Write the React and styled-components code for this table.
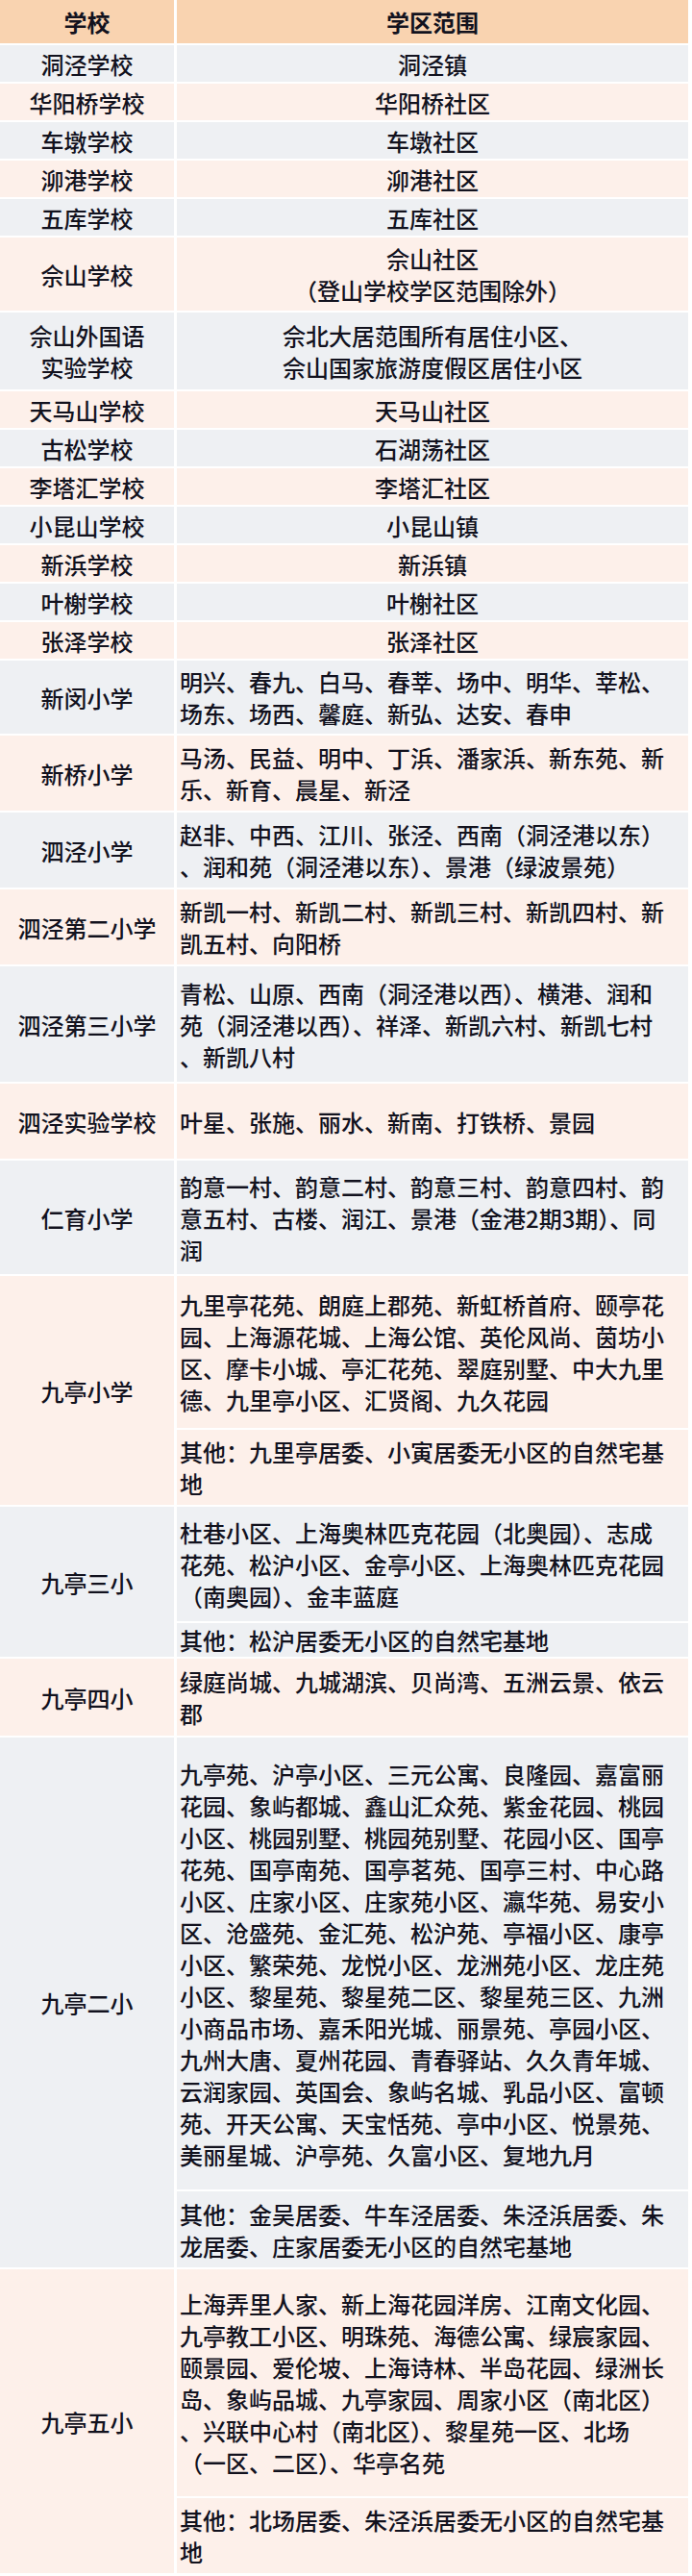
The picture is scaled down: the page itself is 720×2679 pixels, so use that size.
import React from 'react';
import styled, {createGlobalStyle} from 'styled-components';

const tones = {
  head: '#f9d3b0',
  gray: '#eef0f3',
  peach: '#fdf0ea',
};

const GlobalStyle = createGlobalStyle`
  html, body {
    margin: 0;
    padding: 0;
    background: #fff;
  }
  body {
    font-family: "Noto Sans CJK SC", "Noto Sans", sans-serif;
    color: #12121e;
  }
`;

const Sheet = styled.div`
  display: grid;
  grid-template-columns: 181px 532px;
  column-gap: 3px;
  row-gap: 2px;
  width: 716px;
  padding-bottom: 3px;
  font-size: 24px;
  line-height: 33px;
  font-weight: 500;
`;

const HeadCell = styled.div`
  background: ${tones.head};
  height: 45px;
  display: flex;
  align-items: center;
  justify-content: center;
  font-weight: 700;
  font-size: 24px;
`;

const SchoolCell = styled.div`
  grid-row: span ${({$span}) => $span};
  background: ${({$tone}) => tones[$tone]};
  display: flex;
  flex-direction: column;
  align-items: center;
  justify-content: center;
  text-align: center;
`;

const AreaCell = styled.div`
  background: ${({$tone}) => tones[$tone]};
  min-height: ${({$h}) => $h}px;
  display: flex;
  flex-direction: column;
  justify-content: center;
  align-items: ${({$center}) => ($center ? 'center' : 'flex-start')};
  padding: 0 3px;
  box-sizing: border-box;
`;

const Line = styled.span`
  display: block;
  white-space: nowrap;
`;

const rows = [
  {name: ['洞泾学校'], parts: [{h: 38, center: true, lines: ['洞泾镇']}]},
  {name: ['华阳桥学校'], parts: [{h: 38, center: true, lines: ['华阳桥社区']}]},
  {name: ['车墩学校'], parts: [{h: 38, center: true, lines: ['车墩社区']}]},
  {name: ['泖港学校'], parts: [{h: 38, center: true, lines: ['泖港社区']}]},
  {name: ['五库学校'], parts: [{h: 38, center: true, lines: ['五库社区']}]},
  {name: ['佘山学校'], parts: [{h: 76, center: true, lines: ['佘山社区', '（登山学校学区范围除外）']}]},
  {
    name: ['佘山外国语', '实验学校'],
    parts: [{h: 80, center: true, lines: ['佘北大居范围所有居住小区、', '佘山国家旅游度假区居住小区']}],
  },
  {name: ['天马山学校'], parts: [{h: 38, center: true, lines: ['天马山社区']}]},
  {name: ['古松学校'], parts: [{h: 38, center: true, lines: ['石湖荡社区']}]},
  {name: ['李塔汇学校'], parts: [{h: 38, center: true, lines: ['李塔汇社区']}]},
  {name: ['小昆山学校'], parts: [{h: 38, center: true, lines: ['小昆山镇']}]},
  {name: ['新浜学校'], parts: [{h: 38, center: true, lines: ['新浜镇']}]},
  {name: ['叶榭学校'], parts: [{h: 38, center: true, lines: ['叶榭社区']}]},
  {name: ['张泽学校'], parts: [{h: 38, center: true, lines: ['张泽社区']}]},
  {
    name: ['新闵小学'],
    parts: [{h: 76, lines: ['明兴、春九、白马、春莘、场中、明华、莘松、', '场东、场西、馨庭、新弘、达安、春申']}],
  },
  {
    name: ['新桥小学'],
    parts: [{h: 78, lines: ['马汤、民益、明中、丁浜、潘家浜、新东苑、新', '乐、新育、晨星、新泾']}],
  },
  {
    name: ['泗泾小学'],
    parts: [{h: 78, lines: ['赵非、中西、江川、张泾、西南（洞泾港以东）', '、润和苑（洞泾港以东）、景港（绿波景苑）']}],
  },
  {
    name: ['泗泾第二小学'],
    parts: [{h: 78, lines: ['新凯一村、新凯二村、新凯三村、新凯四村、新', '凯五村、向阳桥']}],
  },
  {
    name: ['泗泾第三小学'],
    parts: [
      {
        h: 120,
        lines: ['青松、山原、西南（洞泾港以西）、横港、润和', '苑（洞泾港以西）、祥泽、新凯六村、新凯七村', '、新凯八村'],
      },
    ],
  },
  {name: ['泗泾实验学校'], parts: [{h: 78, lines: ['叶星、张施、丽水、新南、打铁桥、景园']}]},
  {
    name: ['仁育小学'],
    parts: [
      {
        h: 118,
        lines: ['韵意一村、韵意二村、韵意三村、韵意四村、韵', '意五村、古楼、润江、景港（金港2期3期）、同', '润'],
      },
    ],
  },
  {
    name: ['九亭小学'],
    parts: [
      {
        h: 158,
        lines: [
          '九里亭花苑、朗庭上郡苑、新虹桥首府、颐亭花',
          '园、上海源花城、上海公馆、英伦风尚、茵坊小',
          '区、摩卡小城、亭汇花苑、翠庭别墅、中大九里',
          '德、九里亭小区、汇贤阁、九久花园',
        ],
      },
      {h: 78, lines: ['其他：九里亭居委、小寅居委无小区的自然宅基', '地']},
    ],
  },
  {
    name: ['九亭三小'],
    parts: [
      {
        h: 119,
        lines: ['杜巷小区、上海奥林匹克花园（北奥园）、志成', '花苑、松沪小区、金亭小区、上海奥林匹克花园', '（南奥园）、金丰蓝庭'],
      },
      {h: 35, lines: ['其他：松沪居委无小区的自然宅基地']},
    ],
  },
  {
    name: ['九亭四小'],
    parts: [{h: 80, lines: ['绿庭尚城、九城湖滨、贝尚湾、五洲云景、依云', '郡']}],
  },
  {
    name: ['九亭二小'],
    parts: [
      {
        h: 470,
        lines: [
          '九亭苑、沪亭小区、三元公寓、良隆园、嘉富丽',
          '花园、象屿都城、鑫山汇众苑、紫金花园、桃园',
          '小区、桃园别墅、桃园苑别墅、花园小区、国亭',
          '花苑、国亭南苑、国亭茗苑、国亭三村、中心路',
          '小区、庄家小区、庄家苑小区、瀛华苑、易安小',
          '区、沧盛苑、金汇苑、松沪苑、亭福小区、康亭',
          '小区、繁荣苑、龙悦小区、龙洲苑小区、龙庄苑',
          '小区、黎星苑、黎星苑二区、黎星苑三区、九洲',
          '小商品市场、嘉禾阳光城、丽景苑、亭园小区、',
          '九州大唐、夏州花园、青春驿站、久久青年城、',
          '云润家园、英国会、象屿名城、乳品小区、富顿',
          '苑、开天公寓、天宝恬苑、亭中小区、悦景苑、',
          '美丽星城、沪亭苑、久富小区、复地九月',
        ],
      },
      {h: 79, lines: ['其他：金吴居委、牛车泾居委、朱泾浜居委、朱', '龙居委、庄家居委无小区的自然宅基地']},
    ],
  },
  {
    name: ['九亭五小'],
    parts: [
      {
        h: 236,
        lines: [
          '上海弄里人家、新上海花园洋房、江南文化园、',
          '九亭教工小区、明珠苑、海德公寓、绿宸家园、',
          '颐景园、爱伦坡、上海诗林、半岛花园、绿洲长',
          '岛、象屿品城、九亭家园、周家小区（南北区）',
          '、兴联中心村（南北区）、黎星苑一区、北场',
          '（一区、二区）、华亭名苑',
        ],
      },
      {h: 78, lines: ['其他：北场居委、朱泾浜居委无小区的自然宅基', '地']},
    ],
  },
];

const SchoolGroup = ({row, tone}) => (
  <>
    <SchoolCell $span={row.parts.length} $tone={tone}>
      {row.name.map(n => <Line key={n}>{n}</Line>)}
    </SchoolCell>
    {row.parts.map((part, i) => (
      <AreaCell key={i} $tone={tone} $h={part.h} $center={part.center}>
        {part.lines.map((l, j) => <Line key={j}>{l}</Line>)}
      </AreaCell>
    ))}
  </>
);

const App = () => (
  <>
    <GlobalStyle />
    <Sheet>
      <HeadCell>学校</HeadCell>
      <HeadCell>学区范围</HeadCell>
      {rows.map((row, i) => (
        <SchoolGroup key={row.name[0]} row={row} tone={i % 2 === 0 ? 'gray' : 'peach'} />
      ))}
    </Sheet>
  </>
);

export default App;
